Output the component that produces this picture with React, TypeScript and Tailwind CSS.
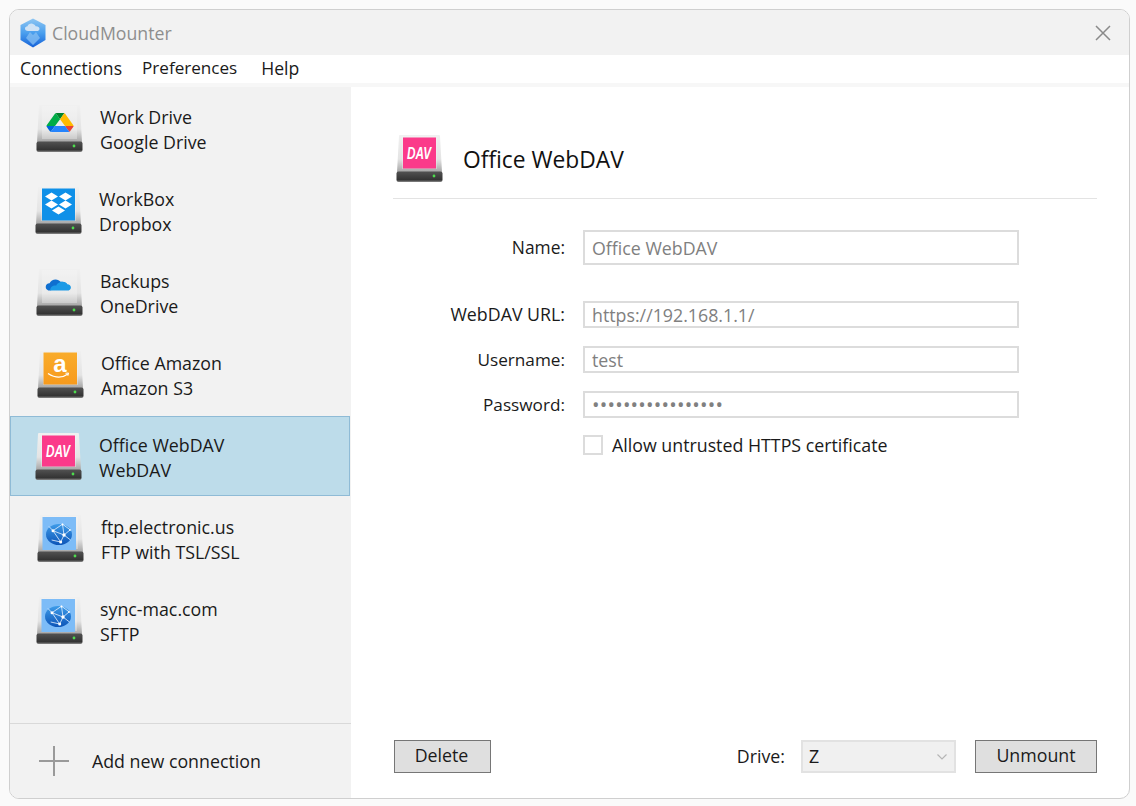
import { ReactNode } from 'react';

const GoogleLogo = () => (
  <g transform="translate(10.5 8) scale(0.31 0.245)">
    <path d="m6.6 66.85 3.85 6.65c.8 1.4 1.95 2.5 3.3 3.3l13.75-23.8h-27.5c0 1.55.4 3.1 1.2 4.5z" fill="#0066da" />
    <path d="m43.65 25-13.75-23.8c-1.35.8-2.5 1.9-3.3 3.3l-25.4 44a9.06 9.06 0 0 0 -1.2 4.5h27.5z" fill="#00ac47" />
    <path d="m73.55 76.8c1.35-.8 2.5-1.9 3.3-3.3l1.6-2.75 7.65-13.25c.8-1.4 1.2-2.95 1.2-4.5h-27.502l5.852 11.5z" fill="#ea4335" />
    <path d="m43.65 25 13.75-23.8c-1.35-.8-2.9-1.2-4.5-1.2h-18.5c-1.6 0-3.15.45-4.5 1.2z" fill="#00832d" />
    <path d="m59.8 53h-32.3l-13.75 23.8c1.35.8 2.9 1.2 4.5 1.2h50.8c1.6 0 3.15-.45 4.5-1.2z" fill="#2684fc" />
    <path d="m73.4 26.5-12.7-22c-.8-1.4-1.95-2.5-3.3-3.3l-13.75 23.8 16.15 28h27.45c0-1.55-.4-3.1-1.2-4.5z" fill="#ffba00" />
  </g>
);

const DropboxLogo = () => (
  <g>
    <rect x="7" y="1.5" width="33" height="32" fill="#0f90e8" />
    <g fill="#fff">
      <path d="M16.500 5.500l6.500 4-6.500 4-6.500-4z" />
      <path d="M30.500 5.500l6.500 4-6.500 4-6.500-4z" />
      <path d="M16.500 13.500l6.500 4-6.500 4-6.500-4z" />
      <path d="M30.500 13.500l6.500 4-6.500 4-6.500-4z" />
      <path d="M23.500 19.500l6.500 4-6.500 4-6.500-4z" />
    </g>
  </g>
);

const OneDriveLogo = () => (
  <g transform="translate(4.500 2.800) scale(0.8)">
    <path d="M12 23.500c-3.400 0-5.500-2-5.500-4.600 0-2.500 2-4.400 4.800-4.500 1.300-3 4.200-4.900 7.600-4.900 2.600 0 4.900 1.100 6.300 3 3.800-.3 7 1.200 8.200 3.700z" fill="#0f6fd0" />
    <path d="M12 23.500h21c3.200 0 5-1.700 5-3.900 0-2.200-1.800-3.900-4.400-4-1.200-2.600-4.400-3.700-8-2.900-3 .6-5 2.400-5.900 4.400-4.200-.5-7.600 1.700-7.700 6.400z" fill="#1c9ae6" />
  </g>
);

const AmazonLogo = () => (
  <g>
    <defs>
      <linearGradient id="amazon-bg" x1="0" y1="0" x2="0" y2="1">
        <stop offset="0" stopColor="#f9ac2b" />
        <stop offset="1" stopColor="#f79a1d" />
      </linearGradient>
    </defs>
    <rect x="6.500" y="1.500" width="33.500" height="32" fill="url(#amazon-bg)" />
    <text x="23" y="21" textAnchor="middle" fill="#fff" fontSize="24" fontWeight="700" fontFamily="'Liberation Sans', sans-serif">a</text>
    <path d="M11 22.500c7 4.600 14 4.800 20 .5" fill="none" stroke="#fff" strokeWidth="1.100" />
    <path d="M28.500 22.300l3-.3-.6 2.800" fill="none" stroke="#fff" strokeWidth="1" />
  </g>
);

const DavLogo = () => (
  <g>
    <rect x="7" y="2.500" width="33" height="31" fill="#fb3a8a" />
    <text x="11" y="23.500" textLength="24" lengthAdjust="spacingAndGlyphs" fill="#fff" fontSize="16" fontStyle="italic" fontWeight="700" fontFamily="'Liberation Sans', sans-serif">DAV</text>
  </g>
);

const GlobeLogo = () => (
  <g>
    <defs>
      <linearGradient id="globe-fill" x1="0" y1="0" x2="0" y2="1">
        <stop offset="0" stopColor="#3d9be8" />
        <stop offset="1" stopColor="#0d55b8" />
      </linearGradient>
    </defs>
    <rect x="5.500" y="2" width="33.500" height="33" fill="#7dbcf7" />
    <ellipse cx="22" cy="19.500" rx="13" ry="10.500" fill="url(#globe-fill)" />
    <g stroke="#e8f3ff" strokeWidth="0.8" fill="none">
      <path d="M12 11.500l4 4.200 9.500-6.500 7.500 5.500M16 15.700l11 4.300 6-5M25.500 9.200l1.500 10.800-3.300 7-7.700-11.300M27 20l6.500 5M23.700 27l-9-2" />
    </g>
    <g fill="#fff">
      <circle cx="16" cy="15.700" r="1.500" />
      <circle cx="27" cy="20" r="1.700" />
      <circle cx="23.700" cy="27" r="1.500" />
      <circle cx="25.500" cy="9.500" r="1" />
      <circle cx="33" cy="15" r="0.900" />
    </g>
  </g>
);

// generic disk, the service logo goes on its face
const DriveIcon = ({ children }: { children: ReactNode }) => (
  <svg width="47" height="47" viewBox="0 0 47 47" className="shrink-0">
    <defs>
      <linearGradient id="disk-body" x1="0" y1="0" x2="0" y2="1">
        <stop offset="0" stopColor="#f0f0f0" />
        <stop offset="0.65" stopColor="#e4e4e4" />
        <stop offset="1" stopColor="#a5a5a5" />
      </linearGradient>
      <linearGradient id="disk-bar" x1="0" y1="0" x2="0" y2="1">
        <stop offset="0" stopColor="#525252" />
        <stop offset="0.8" stopColor="#333" />
        <stop offset="1" stopColor="#8c8c8c" />
      </linearGradient>
    </defs>
    <path d="M3 1q0-1 1-1h39q1 0 1 1l2 36h-45z" fill="url(#disk-body)" />
    <rect x="6" y="1" width="35" height="33" fill="#f6f6f6" opacity="0.35" />
    {children}
    <rect x="0.500" y="36.500" width="46" height="10.500" rx="2" fill="url(#disk-bar)" />
    <circle cx="38" cy="41" r="1.400" fill="#4ddb4d" />
  </svg>
);

const logos: Record<string, ReactNode> = {
  google: <GoogleLogo />,
  dropbox: <DropboxLogo />,
  onedrive: <OneDriveLogo />,
  amazon: <AmazonLogo />,
  dav: <DavLogo />,
  globe: <GlobeLogo />,
};

const connections = [
  { name: 'Work Drive', kind: 'Google Drive', logo: 'google', pad: 'pl-[25px]' },
  { name: 'WorkBox', kind: 'Dropbox', logo: 'dropbox', pad: 'pl-[24px]' },
  { name: 'Backups', kind: 'OneDrive', logo: 'onedrive', pad: 'pl-[25px]' },
  { name: 'Office Amazon', kind: 'Amazon S3', logo: 'amazon', pad: 'pl-[26px]' },
  { name: 'Office WebDAV', kind: 'WebDAV', logo: 'dav', pad: 'pl-[24px]', selected: true },
  { name: 'ftp.electronic.us', kind: 'FTP with TSL/SSL', logo: 'globe', pad: 'pl-[26px]' },
  { name: 'sync-mac.com', kind: 'SFTP', logo: 'globe', pad: 'pl-[25px]' },
];

const Field = ({ label, value, tall, dots, labelSize = 'text-[17.8px]' }: { label: string; value: string; tall?: boolean; dots?: boolean; labelSize?: string }) => (
  <div className="flex items-center">
    <label className={`w-[172px] text-right text-[#1a1a1a] ${labelSize}`}>{label}</label>
    <input
      readOnly
      value={value}
      className={`ml-[18px] w-[436px] border-2 border-[#dcdcdc] bg-white px-[7px] text-[#808080] outline-none ${tall ? 'h-[35px]' : 'h-[27px]'} ${dots ? 'text-[20px] tracking-[0.2px]' : 'text-[17.8px]'}`}
    />
  </div>
);

export default function App() {
  return (
    <div className="h-[806px] w-[1136px] bg-[#fafafa] pl-[9px] pt-[9px] font-['Open_Sans',sans-serif] text-[#111]">
      <div className="flex h-[790px] w-[1121px] flex-col overflow-hidden rounded-[10px] border border-[#cfcfcf] bg-white">
        <div className="flex h-[45px] shrink-0 items-center justify-between bg-[#f2f2f2] pl-[9px] pr-[18px]">
          <div className="flex items-center gap-[5px]">
            <svg width="28" height="30" viewBox="0 0 28 30">
              <defs>
                <linearGradient id="app-hex" x1="0" y1="0" x2="0" y2="1">
                  <stop offset="0" stopColor="#8fc6f2" />
                  <stop offset="0.5" stopColor="#4a9fee" />
                  <stop offset="1" stopColor="#1561d8" />
                </linearGradient>
              </defs>
              <path d="M14 0.500l12.500 6.500v15l-12.500 7.500-12.500-7.500v-15z" fill="url(#app-hex)" />
              <path d="M7 20l4-6 3 3 3-3 4 6-7 7z" fill="#82bdf2" opacity="0.8" />
              <path d="M9 13c-2 0-3-1-3-2.400s1-2.300 2.500-2.300c.5-2 2.800-3.100 5-2.600 1.600.4 2.700 1.300 3.200 2.600 2-.2 3.800.7 3.800 2.400 0 1.500-1.200 2.300-3 2.300z" fill="#cfe2f5" />
            </svg>
            <span className="pt-px text-[17.7px] text-[#8e8e8e]">CloudMounter</span>
          </div>
          <svg width="16" height="16" viewBox="0 0 16 16" stroke="#8a8a8a" strokeWidth="1.500">
            <path d="M1 1l14 14M15 1l-14 14" />
          </svg>
        </div>
        <div className="flex h-[28px] shrink-0 items-center bg-white pb-[2px] pl-[10px] text-[17.6px] text-[#1a1a1a]">
          <span>Connections</span>
          <span className="ml-[20px] text-[17.1px]">Preferences</span>
          <span className="ml-[24px]">Help</span>
        </div>
        <div className="h-[4px] shrink-0 bg-[#f7f7f7]" />
        <div className="flex min-h-0 flex-1">
          <aside className="flex w-[341px] shrink-0 flex-col bg-[#f2f2f2]">
            <div className="flex-1 pt-px">
              {connections.map((c) => (
                <div
                  key={c.name}
                  className={`mb-[2px] flex h-[80px] w-[340px] items-center gap-[17px] border ${c.pad} ${c.selected ? 'border-[#8fbbd6] bg-[#bddcea]' : 'border-transparent'}`}
                >
                  <DriveIcon>{logos[c.logo]}</DriveIcon>
                  <div className="pt-[4px] text-[17.8px] leading-[25px] text-[#1a1a1a]">
                    <div>{c.name}</div>
                    <div>{c.kind}</div>
                  </div>
                </div>
              ))}
            </div>
            <div className="flex h-[75px] shrink-0 items-center border-t border-[#d9d9d9] pl-[29px]">
              <svg width="30" height="30" viewBox="0 0 30 30" stroke="#9a9a9a" strokeWidth="2">
                <path d="M15 0v30M0 15h30" />
              </svg>
              <span className="ml-[23px] text-[17.8px] text-[#1a1a1a]">Add new connection</span>
            </div>
          </aside>
          <main className="flex flex-1 flex-col pb-[25px] pl-[42px] pr-[32px] pt-[48px]">
            <div className="flex items-center border-b border-[#e3e3e3] pb-[16px] pl-[3px]">
              <DriveIcon>
                <DavLogo />
              </DriveIcon>
              <h1 className="ml-[20px] pt-[4px] text-[22.8px] text-[#111]">Office WebDAV</h1>
            </div>
            <div className="mt-[31px] flex flex-col gap-[18px]">
              <div className="mb-[18px]">
                <Field label="Name:" value="Office WebDAV" tall labelSize="text-[17.4px]" />
              </div>
              <Field label="WebDAV URL:" value="https://192.168.1.1/" />
              <Field label="Username:" value="test" labelSize="text-[17.2px]" />
              <Field label="Password:" value="•••••••••••••••••" dots labelSize="text-[17.2px]" />
              <div className="-mt-px flex items-center pl-[190px] leading-[20px]">
                <span className="h-[20px] w-[20px] border-2 border-[#dcdcdc] bg-white" />
                <span className="ml-[9px] text-[17.8px] text-[#1a1a1a]">Allow untrusted HTTPS certificate</span>
              </div>
            </div>
            <div className="mt-auto flex items-center">
              <button className="ml-px h-[33px] w-[97px] border border-[#767676] bg-[#dfdfdf] pb-[3px] pr-[2px] text-[17.8px] text-[#1a1a1a]">Delete</button>
              <span className="ml-auto text-[17.8px] text-[#1a1a1a]">Drive:</span>
              <div className="ml-[16px] flex h-[33px] w-[155px] items-center justify-between border-2 border-[#e2e2e2] bg-[#f0f0f0] pl-[6px] pr-[7px] text-[17.8px] text-[#1a1a1a]">
                <span>Z</span>
                <svg width="10" height="6" viewBox="0 0 10 6" fill="none" stroke="#b5b5b5" strokeWidth="1.200">
                  <path d="M0.500 0.500l4.500 4.500 4.500-4.500" />
                </svg>
              </div>
              <button className="ml-[19px] h-[33px] w-[122px] border border-[#767676] bg-[#dfdfdf] pb-[3px] text-[17.8px] text-[#1a1a1a]">Unmount</button>
            </div>
          </main>
        </div>
      </div>
    </div>
  );
}
